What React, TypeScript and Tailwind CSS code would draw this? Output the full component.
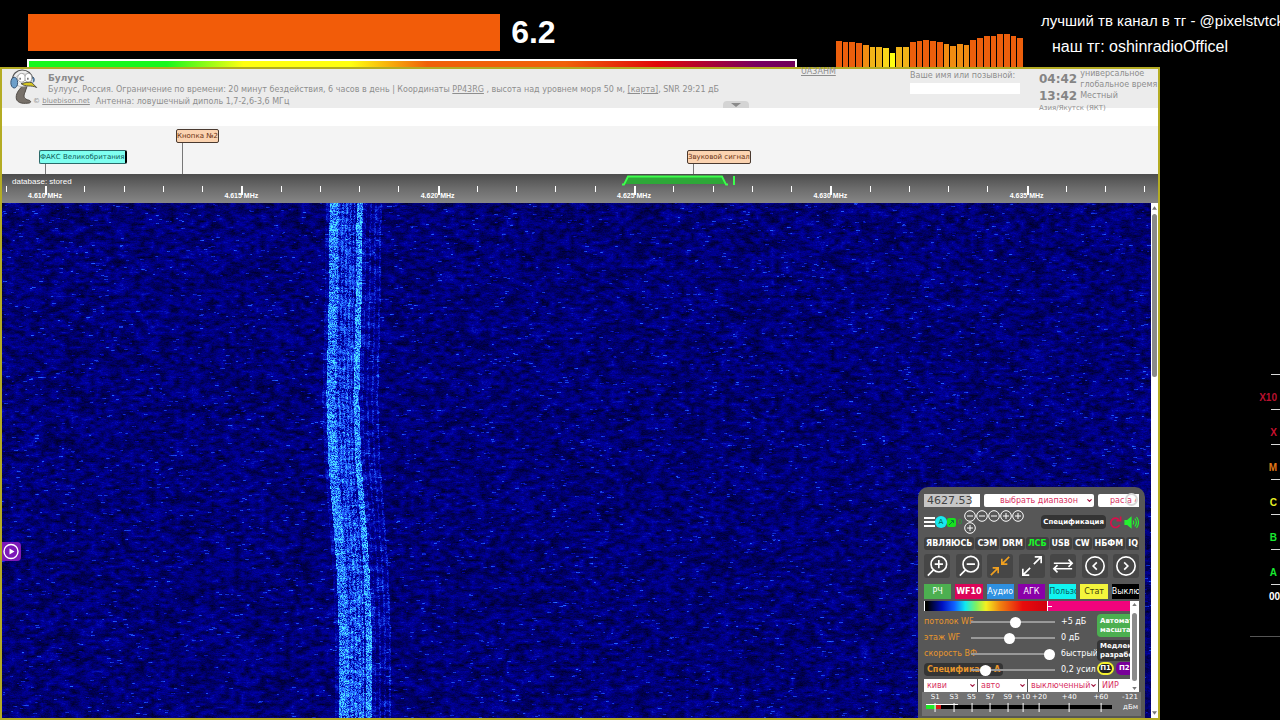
import { useEffect, useRef, type ReactNode } from "react";
import { ChevronDown } from "lucide-react";

const START_KHZ = 4608.905;
const SPAN_KHZ = 29.44;
const pos = (khz: number) => `${((khz - START_KHZ) / SPAN_KHZ) * 100}%`;

const TICKS = Array.from({ length: 30 }, (_, i) => 4609 + i);
const MHZ_LABELS = [4610, 4615, 4620, 4625, 4630, 4635];

const SPECTRUM = [26, 25, 25, 24, 22, 20, 20, 19, 14, 20, 20, 25, 26, 27, 26, 25, 23, 21, 23, 22, 27, 29, 31, 31, 33, 33, 31, 29];

const barColor = (v: number) => {
  if (v < 16) return "#ffff10";
  if (v < 20) return "#fbd81a";
  if (v < 21) return "#f2b418";
  if (v < 24) return "#f08c12";
  return "#ec5f0c";
};

const FLARE_CLASSES = [
  { name: "X10", color: "text-[#b8102e]" },
  { name: "X", color: "text-[#c8102e]" },
  { name: "M", color: "text-[#e07818]" },
  { name: "C", color: "text-[#e6f024]" },
  { name: "B", color: "text-[#18e830]" },
  { name: "A", color: "text-[#18e830]" },
];

// left edge of the carrier, sampled down the waterfall
const DRIFT: [number, number][] = [
  [0, 0.2848], [0.2, 0.2837], [0.38, 0.2818], [0.5, 0.2835],
  [0.62, 0.2878], [0.72, 0.291], [0.85, 0.2929], [1, 0.2933],
];

function driftAt(t: number) {
  for (let i = 1; i < DRIFT.length; i++) {
    const [t0, v0] = DRIFT[i - 1];
    const [t1, v1] = DRIFT[i];
    if (t <= t1) return v0 + ((t - t0) / (t1 - t0)) * (v1 - v0);
  }
  return DRIFT[DRIFT.length - 1][1];
}

// signal strength by distance from the left edge
function signalAt(d: number, t: number) {
  if (d < -4 || d > 52) return 0;
  if (d < 0) return 0.12;
  if (d < 9) return 0.5;
  if (d < 25) return (Math.floor(d) % 4 < 2 ? 0.38 : 0.24) + (t - 0.3) * 0.14;
  if (d < 27) return 0.2;
  if (d < 33) return 0.54;
  if (d < 36) return 0.14;
  return Math.floor(d) % 5 < 2 ? 0.18 : 0.07;
}

function Waterfall() {
  const ref = useRef<HTMLCanvasElement>(null);

  useEffect(() => {
    const canvas = ref.current;
    if (!canvas) return;
    const w = canvas.clientWidth;
    const h = canvas.clientHeight;
    canvas.width = w;
    canvas.height = h;
    const ctx = canvas.getContext("2d");
    if (!ctx) return;
    const img = ctx.createImageData(w, h);

    let seed = 4627;
    const rnd = () => {
      seed = (seed * 1664525 + 1013904223) >>> 0;
      return seed / 4294967296;
    };

    // coarse cells give the soft clumps under the fine grain
    const cw = Math.ceil(w / 5) + 2;
    const ch = Math.ceil(h / 3) + 2;
    const cells = Array.from({ length: cw * ch }, rnd);

    for (let y = 0; y < h; y++) {
      const left = driftAt(y / h) * w;
      let grain = rnd();
      let streak = 0;
      for (let x = 0; x < w; x++) {
        grain = grain * 0.45 + rnd() * 0.55;
        const fx = x / 5;
        const fy = y / 3;
        const ix = Math.floor(fx);
        const iy = Math.floor(fy);
        const ax = fx - ix;
        const ay = fy - iy;
        const c = iy * cw + ix;
        const soft =
          (cells[c] * (1 - ax) + cells[c + 1] * ax) * (1 - ay) +
          (cells[c + cw] * (1 - ax) + cells[c + cw + 1] * ax) * ay;
        let v = soft * 0.3 + grain * 0.2;
        if (rnd() > 0.994) streak = 2 + Math.floor(rnd() * 3);
        if (streak > 0) {
          v += 0.24;
          streak--;
        }
        v += signalAt(x - left, y / h) * (0.35 + rnd() * 1.1);

        v = Math.min(1, v);
        const i = (y * w + x) * 4;
        const hot = Math.max(0, v - 0.38) / 0.62;
        img.data[i] = hot * 80;
        img.data[i + 1] = hot * 235;
        img.data[i + 2] = Math.min(255, 24 + v * 370);
        img.data[i + 3] = 255;
      }
    }
    ctx.putImageData(img, 0, 0);
  }, []);

  return (
    <div className="relative min-w-0 flex-1">
      <canvas ref={ref} className="absolute inset-0 h-full w-full" />
    </div>
  );
}

function Pelican() {
  return (
    <svg viewBox="0 0 30 40" className="h-[39px] w-[30px] shrink-0" aria-hidden="true">
      <path d="M14 17C11 20 7 24 7 29c0 5 5 7 12 6 3 0 4-2 1-3-5-1-6-4-4-8l2-6z" fill="#777069" stroke="#4d4843" strokeWidth="1" />
      <path d="M3 12C3 5 8 1 13 1c6 0 10 4 11 9" fill="none" stroke="#555" strokeWidth="1.2" />
      <path d="M6 10c2-6 14-7 17 0l-1 6c-5 3-11 3-15 0z" fill="#f4f4f4" stroke="#999" strokeWidth="0.600" />
      <ellipse cx="12.500" cy="9" rx="4" ry="4.500" fill="#fff" stroke="#888" strokeWidth="0.700" />
      <ellipse cx="19.500" cy="9" rx="3.500" ry="4.500" fill="#fff" stroke="#888" strokeWidth="0.700" />
      <path d="M11 9v2M19 9v2" stroke="#222" strokeWidth="1" />
      <path d="M12 15c4-1 8-2 11-1l5 5c-6-3-11 0-16-4z" fill="#d8c820" stroke="#444" strokeWidth="0.900" />
      <ellipse cx="5" cy="14" rx="3.500" ry="5.500" fill="#6d9fca" stroke="#35506e" strokeWidth="1" />
      <path d="M24 8c2 1 2 5 0 6" fill="#5b8fc0" stroke="#35506e" strokeWidth="0.900" />
    </svg>
  );
}

function StreamHeader() {
  const level = 61.4;
  return (
    <header className="flex h-[67px] shrink-0">
      <div className="flex min-w-0 flex-1 flex-col justify-between pl-[27px] pt-[14px]">
        <div className="flex h-[37px] items-center gap-[11px] pl-px">
          <div className="h-full bg-[#f25c09]" style={{ width: `${level}%` }} />
          <span className="text-[32px] leading-[37px] font-bold text-white">6.2</span>
        </div>
        <div className="h-[8px] border-x-2 border-t-2 border-white bg-[linear-gradient(90deg,#18f81c_0%,#18f81c_18%,#ffff10_28%,#ffff10_42%,#f06008_52%,#f06008_70%,#e00808_82%,#780060_95%,#700058_100%)]" />
      </div>
      <div className="ml-[39px] flex w-[187px] shrink-0 items-end gap-px">
        {SPECTRUM.map((v, i) => (
          <div key={i} className="min-w-0 flex-1" style={{ height: v, background: barColor(v) }} />
        ))}
      </div>
      <div className="ml-[18px] w-[239px] shrink-0 pt-[10px] whitespace-nowrap text-white">
        <p className="text-[15px] leading-[22px]">лучший тв канал в тг - @pixelstvtck</p>
        <p className="pt-[4px] pl-[11px] text-[16px] leading-[22px]">наш тг: oshinradioOfficel</p>
      </div>
    </header>
  );
}

function StationBar() {
  return (
    <div className="relative flex h-[39px] shrink-0 bg-[#ececec] pl-[7px] font-['DejaVu_Sans',sans-serif] text-[8px] leading-[12px] text-[#8e8e8e]">
      <Pelican />
      <div className="min-w-0 flex-1 pt-[3px] pl-[9px] whitespace-nowrap">
        <h1 className="text-[9px] leading-[12px] font-bold text-[#8a8a8a]">Булуус</h1>
        <p>
          Булуус, Россия. Ограничение по времени: 20 минут бездействия, 6 часов в день | Координаты{" "}
          <a href="#grid" className="underline">PP43RG</a> , высота над уровнем моря 50 м,{" "}
          <a href="#map" className="underline">[карта]</a>, SNR 29:21 дБ
        </p>
        <p className="-ml-[15px] flex gap-[6px] leading-[11px]">
          <a href="#logo" className="text-[7px]">© <span className="underline">bluebison.net</span></a>
          <span>Антенна: ловушечный диполь 1,7-2,6-3,6 МГц</span>
        </p>
      </div>
      <a href="#operator" className="absolute top-[-3px] left-[799px] underline">UA3AHM</a>
      <button aria-label="Свернуть" className="absolute bottom-0 left-[721px] flex h-[7px] w-[26px] items-center justify-center rounded-t bg-[#d4d4d4]">
        <svg viewBox="0 0 10 4" className="h-[4px] w-[10px]"><path d="M0 0h10L5 4z" fill="#8a8a8a" /></svg>
      </button>
      <label className="w-[129px] shrink-0 pt-[1px]">
        Ваше имя или позывной:
        <input className="mt-px block h-[11px] w-[110px] bg-white" />
      </label>
      <div className="w-[119px] shrink-0 whitespace-nowrap">
        <div className="flex h-[20px] items-center gap-[3px]">
          <b className="text-[12px] text-[#858585]">04:42</b>
          <span className="leading-[11px]">универсальное<br />глобальное время</span>
        </div>
        <div className="flex h-[14px] items-center gap-[3px]">
          <b className="text-[12px] text-[#858585]">13:42</b>
          <span>Местный</span>
        </div>
        <p className="text-[7px] leading-[10px]">Азия/Якутск (ЯКТ)</p>
      </div>
    </div>
  );
}

function Bookmark({ khz, className, stem, children }: { khz: number; className: string; stem: string; children: ReactNode }) {
  return (
    <div className="absolute bottom-0" style={{ left: pos(khz) }}>
      <button className={`-ml-[6px] block h-[14px] rounded-[2px] border text-[7px] leading-[12px] whitespace-nowrap ${className}`}>
        {children}
      </button>
      <div className={`w-px bg-[#777] ${stem}`} />
    </div>
  );
}

function Scale() {
  return (
    <>
      <div className="relative h-[48px] shrink-0 bg-[#f4f4f4] font-['DejaVu_Sans',sans-serif]">
        <Bookmark khz={4610} stem="h-[10px]" className="border-[#2b6a6a] border-r-2 border-r-black bg-[#7ffff0] text-[#0e5a58]">
          ФАКС Великобритания
        </Bookmark>
        <Bookmark khz={4613.49} stem="h-[31px]" className="border-[#4a3a30] bg-[#fbd3b0] text-[#6a3010]">
          Кнопка №2
        </Bookmark>
        <Bookmark khz={4626.5} stem="h-[10px]" className="border-[#4a3a30] bg-[#fbd3b0] text-[#6a3010]">
          Звуковой сигнал
        </Bookmark>
      </div>
      <div className="relative h-[29px] shrink-0 overflow-hidden bg-[linear-gradient(#4c4c4c,#6c6c6c_50%,#868686)] text-[7px] font-bold text-white">
        <span className="block pt-[3px] pl-[10px] text-[8px] leading-[10px] font-normal">database: stored</span>
        {TICKS.map((k) => (
          <i
            key={k}
            className={k % 5 === 0 ? "absolute top-[12px] h-[9px] w-[2px] bg-white" : "absolute top-[12px] h-[6px] w-px bg-white"}
            style={{ left: pos(k) }}
          />
        ))}
        {MHZ_LABELS.map((k) => (
          <span key={k} className="absolute top-[17px] -translate-x-1/2 leading-[10px] whitespace-nowrap" style={{ left: pos(k) }}>
            {(k / 1000).toFixed(3)} MHz
          </span>
        ))}
        <svg viewBox="0 0 114 11" className="absolute top-[1px] h-[11px] w-[114px]" style={{ left: pos(4624.7) }} aria-hidden="true">
          <path d="M2 9L6 1.500H100L104 9" fill="#2ea838" />
          <path d="M0 9.500H2L6 1.500H100L104 9.500H106" fill="none" stroke="#3cff4c" strokeWidth="1.800" />
          <path d="M112 1v9" stroke="#3cff4c" strokeWidth="2" />
        </svg>
      </div>
    </>
  );
}

function Select({ label, value, className, arrow = true }: { label: string; value: string; className: string; arrow?: boolean }) {
  return (
    <span className={`relative block h-[13px] min-w-0 bg-white text-[#d8315f] ${className}`}>
      <select aria-label={label} className="block h-full w-full appearance-none overflow-hidden px-[3px] text-[8px] leading-[13px] outline-none [text-align-last:inherit]">
        <option>{value}</option>
      </select>
      {arrow && <ChevronDown className="pointer-events-none absolute top-[3px] right-[1px] size-[7px] text-[#a01840]" strokeWidth={4} />}
    </span>
  );
}

function ZoomDot({ plus }: { plus?: boolean }) {
  return (
    <button aria-label={plus ? "Больше" : "Меньше"} className="size-[12px]">
      <svg viewBox="0 0 12 12" className="size-[12px]" fill="none" stroke="#fff" strokeWidth="1">
        <circle cx="6" cy="6" r="5.300" />
        <path d={plus ? "M3 6h6M6 3v6" : "M3 6h6"} />
      </svg>
    </button>
  );
}

const MODES = ["ЯВЛЯЮСЬ", "СЭМ", "DRM", "ЛСБ", "USB", "CW", "НБФМ", "IQ"];

const TOOLS = [
  { name: "Приблизить", d: "M8.500 16L2 22.500M9.500 10h9M14 5.500v9M22.500 10a8.500 8.500 0 1 1-17 0a8.500 8.500 0 1 1 17 0" },
  { name: "Отдалить", d: "M8.500 16L2 22.500M9.500 10h9M22.500 10a8.500 8.500 0 1 1-17 0a8.500 8.500 0 1 1 17 0" },
  { name: "Сжать", d: "M22 2l-8 8M14 4v6h6M2 22l8-8M4 14h6v6", color: "text-[#f0a020]" },
  { name: "Развернуть", d: "M14 10l8-8M15 2h7v7M10 14l-8 8M2 15v7h7" },
  { name: "Поменять", d: "M2 9h20M18 5l4 4-4 4M22 15H2M6 11l-4 4 4 4" },
  { name: "Назад", d: "M14 8l-4 4 4 4M22 12a10 10 0 1 1-20 0a10 10 0 1 1 20 0" },
  { name: "Вперед", d: "M10 8l4 4-4 4M22 12a10 10 0 1 1-20 0a10 10 0 1 1 20 0" },
];

const TABS = [
  { name: "РЧ", cls: "bg-[#4caf50] text-white" },
  { name: "WF10", cls: "bg-[#dc0458] text-white font-bold" },
  { name: "Аудио", cls: "bg-[#2e90e0] text-white" },
  { name: "АГК", cls: "bg-[#8a00a8] text-white" },
  { name: "Пользо", cls: "bg-[#10f4f0] text-[#0a5c60]" },
  { name: "Стат", cls: "bg-[#f4f43c] text-[#404010]" },
  { name: "Выклю", cls: "bg-black text-white" },
];

const SLIDERS = [
  { label: "потолок WF", value: "+5 дБ", at: 54 },
  { label: "этаж WF", value: "0 дБ", at: 45 },
  { label: "скорость ВФ", value: "быстрый", at: 100 },
  { label: "Спецификаци А", value: "0,2 усил", at: 12, boxed: true },
];

const S_UNITS = [
  ["S1", 5], ["S3", 15], ["S5", 24.5], ["S7", 34.5], ["S9", 44], ["+10", 52], ["+20", 61], ["+40", 77], ["+60", 94],
] as const;

function ControlPanel() {
  return (
    <section className="absolute right-[13px] bottom-0 w-[227px] overflow-hidden rounded-t-[10px] bg-[#575757] font-['DejaVu_Sans',sans-serif] text-[8px] text-white">
      <div className="px-[6px] pt-[7px]">
        <div className="flex h-[13px] gap-[4px]">
          <input aria-label="Частота" defaultValue="4627.53" className="w-[56px] bg-[linear-gradient(90deg,#c6c6c6_46px,#fff_46px)] px-[3px] text-[11px] leading-[13px] text-[#444]" />
          <Select label="Диапазон" value="выбрать диапазон" className="w-[110px] rounded-[2px] [text-align-last:center]" />
          <span className="relative min-w-0 flex-1">
            <Select label="Расширение" value="рас:а 4" className="rounded-l-[2px] pl-[9px]" arrow={false} />
            <i className="absolute -top-[1px] right-[1px] size-[13px] rounded-full border-2 border-[#d8d8d8]" />
          </span>
        </div>

        <div className="mt-[2px] flex h-[26px] items-center">
          <button aria-label="Меню" className="flex w-[11px] flex-col gap-[2px]">
            <i className="h-[2px] bg-white" /><i className="h-[2px] bg-white" /><i className="h-[2px] bg-white" />
          </button>
          <button className="size-[12px] rounded-full bg-[#18e8f0] text-[7px] leading-[12px] text-[#064]">A</button>
          <button aria-label="Связь" className="size-[9px] rounded-[2px] bg-[#18e020]">
            <svg viewBox="0 0 9 9" className="size-[9px]"><path d="M2 7l4-4M4 2.500h2.500V5" stroke="#083" fill="none" /></svg>
          </button>
          <span className="w-[8px] text-center text-[7px] text-[#2aa030]">0</span>
          <span className="flex w-[64px] flex-wrap content-center">
            <ZoomDot /><ZoomDot /><ZoomDot /><ZoomDot plus /><ZoomDot plus /><ZoomDot plus />
          </span>
          <button className="ml-auto h-[14px] rounded-[4px] bg-[#343434] px-[2px] text-[7px] leading-[14px] font-bold">Спецификация</button>
          <button aria-label="Обновить" className="ml-[3px]">
            <svg viewBox="0 0 14 14" className="size-[13px]" fill="none" stroke="#d8104c" strokeWidth="1.800">
              <path d="M11.500 9.500A5 5 0 1 1 10.500 3.800M12.500 0.500v4.500h-4.500" />
            </svg>
          </button>
          <button aria-label="Звук" className="ml-[2px]">
            <svg viewBox="0 0 15 13" className="h-[13px] w-[15px]" fill="none" stroke="#24f030" strokeWidth="1.200">
              <path d="M1 4.500h2.500l3.500-3v10L3.500 8.500H1z" fill="#24f030" />
              <path d="M9 4.500q1.500 2 0 4M10.800 2.500q3.200 4 0 8M12.500 1q4 5.500 0 11" />
            </svg>
          </button>
        </div>

        <div className="mt-[2px] flex h-[13px] gap-[1px] overflow-hidden">
          {MODES.map((m) => (
            <button key={m} className={`shrink-0 rounded-[3px] bg-[#404040] px-[2px] text-[8px] leading-[13px] font-bold ${m === "ЛСБ" ? "text-[#18f828]" : ""}`}>
              {m}
            </button>
          ))}
        </div>

        <div className="mt-[4px] flex h-[24px] justify-between">
          {TOOLS.map((t) => (
            <button key={t.name} aria-label={t.name} className={`flex w-[26px] items-center justify-center rounded-[3px] bg-[#464646] ${t.color ?? ""}`}>
              <svg viewBox="0 0 24 24" className="size-[22px]" fill="none" stroke="currentColor" strokeWidth="1.800"><path d={t.d} /></svg>
            </button>
          ))}
        </div>

        <div className="mt-[6px] flex h-[15px] gap-[4px] overflow-hidden">
          {TABS.map((t) => (
            <button key={t.name} className={`min-w-0 flex-1 overflow-hidden text-[8px] leading-[15px] whitespace-nowrap ${t.cls}`}>{t.name}</button>
          ))}
        </div>

        <div className="mt-[2px] flex h-[91px]">
          <div className="flex min-w-0 flex-1 flex-col">
            <div className="flex h-[10px] border-l border-white">
              <div className="w-[60%] border-r border-white bg-[linear-gradient(90deg,#000_2%,#0010c0_14%,#1060ff_24%,#10e8f0_33%,#80f060_42%,#f4f020_50%,#f08010_62%,#e80c0c_80%,#d00010_100%)]" />
              <div className="flex flex-1 items-center bg-[#f0047c]"><i className="h-px w-[4px] bg-white" /></div>
            </div>
            <div className="flex min-h-0 flex-1">
              <div className="w-[173px] shrink-0 pt-[3px]">
                {SLIDERS.map((s) => (
                  <label key={s.label} className="flex h-[16px] items-center whitespace-nowrap">
                    <span className="w-[47px] shrink-0 text-[#e8962c]">
                      <span className={s.boxed ? "rounded-[4px] bg-[#343434] px-[3px] py-[2px] font-bold" : ""}>{s.label}</span>
                    </span>
                    <input
                      type="range"
                      defaultValue={s.at}
                      className="relative h-[11px] w-[84px] shrink-0 appearance-none bg-[linear-gradient(#999,#999)] bg-[length:100%_2px] bg-center bg-no-repeat [&::-webkit-slider-thumb]:size-[11px] [&::-webkit-slider-thumb]:appearance-none [&::-webkit-slider-thumb]:rounded-full [&::-webkit-slider-thumb]:bg-white"
                    />
                    <span className="pl-[6px]">{s.value}</span>
                  </label>
                ))}
              </div>
              <div className="min-w-0 flex-1 overflow-hidden pt-[3px] font-bold">
                <button className="block h-[23px] w-full overflow-hidden rounded-l-[4px] bg-[#4caf50] pl-[3px] text-left text-[7px] leading-[9px]">Автомат<br />масштаб</button>
                <button className="mt-[3px] block h-[21px] w-full overflow-hidden rounded-l-[4px] bg-[#343434] pl-[3px] text-left text-[7px] leading-[9px]">Медлен<br />разрабо</button>
                <div className="mt-[1px] flex gap-[2px]">
                  <button className="h-[13px] w-[17px] shrink-0 rounded-full border-2 border-[#f4f030] bg-[#222] text-[7px] leading-[9px]">П1</button>
                  <button className="h-[13px] w-[20px] shrink-0 rounded-l-[5px] bg-[#780098] pl-[3px] text-left text-[7px] leading-[13px]">П2</button>
                </div>
              </div>
            </div>
            <div className="flex shrink-0 gap-px">
              <Select label="Палитра" value="киви" className="w-[53px]" />
              <Select label="Апертура" value="авто" className="w-[49px]" />
              <Select label="Режим" value="выключенный" className="w-[70px]" />
              <Select label="Фильтр" value="ИИР" className="flex-1" arrow={false} />
            </div>
          </div>
          <div className="flex w-[9px] flex-col items-center justify-between bg-white py-[2px]">
            <svg viewBox="0 0 6 4" className="h-[3px] w-[5px]"><path d="M0 4h6L3 0z" fill="#777" /></svg>
            <i className="h-[68px] w-[5px] rounded-full bg-[#8a8a8a]" />
            <svg viewBox="0 0 6 4" className="h-[3px] w-[5px]"><path d="M0 0h6L3 4z" fill="#777" /></svg>
          </div>
        </div>
      </div>

      <div className="mx-[4px] mb-[2px] flex h-[24px] bg-[#727272] pl-[4px] text-[7px]">
        <div className="relative w-[186px]">
          <div className="absolute inset-x-0 top-[13px] flex h-[4px] bg-black">
            <i className="w-[10px] bg-[#20e828]" />
            <i className="w-[5px] bg-[#d81818]" />
          </div>
          <i className="absolute top-[12px] left-0 h-px w-[32px] bg-white" />
          {S_UNITS.map(([name, left]) => (
            <span key={name} className="absolute top-0 flex -translate-x-1/2 flex-col items-center leading-[10px]" style={{ left: `${left}%` }}>
              {name}
              <i className="mt-[1px] h-[9px] w-px bg-white" />
            </span>
          ))}
        </div>
        <div className="flex-1 pr-[3px] text-right leading-[10px]">-121<br />дБм</div>
      </div>
    </section>
  );
}

function FlareRail() {
  return (
    <aside className="flex w-[120px] shrink-0 flex-col items-end overflow-hidden pt-[307px] text-[10px] font-bold">
      {FLARE_CLASSES.map((f) => (
        <div key={f.name} className="flex h-[35px] flex-col items-end">
          <i className="h-px w-[9px] bg-[#d8d8d8]" />
          <span className={`pt-[17px] pr-[3px] leading-[12px] ${f.color}`}>{f.name}</span>
        </div>
      ))}
      <i className="h-px w-[9px] bg-[#d8d8d8]" />
      <span className="pt-[6px] leading-[12px] text-white">00</span>
      <i className="mt-[33px] h-px w-[30px] bg-[#555]" />
    </aside>
  );
}

export default function App() {
  return (
    <div className="flex h-screen flex-col overflow-hidden bg-black font-['Liberation_Sans',Arial,sans-serif]">
      <StreamHeader />
      <div className="flex min-h-0 flex-1">
        <main className="relative flex min-w-0 flex-1 flex-col border-2 border-[#b4ac24] bg-white">
          <StationBar />
          <div className="h-[18px] shrink-0" />
          <Scale />
          <div className="flex min-h-0 flex-1">
            <Waterfall />
            <div className="flex w-[7px] flex-col items-center justify-between bg-white py-[3px]">
              <svg viewBox="0 0 6 4" className="h-[4px] w-[5px]"><path d="M0 4h6L3 0z" fill="#777" /></svg>
              <i className="mt-[4px] mb-auto h-[32%] w-[5px] rounded-full bg-[#8a8a8a]" />
              <svg viewBox="0 0 6 4" className="h-[4px] w-[5px]"><path d="M0 0h6L3 4z" fill="#777" /></svg>
            </div>
          </div>
          <button aria-label="Воспроизвести" className="absolute top-[473px] left-0 flex size-[19px] items-center justify-center rounded-r-[4px] bg-[#7c18b8]">
            <svg viewBox="0 0 17 17" className="size-[17px]" fill="none" stroke="#fff" strokeWidth="1.400">
              <circle cx="8" cy="8.500" r="7" />
              <path d="M6.500 5.500v6l5-3z" fill="#fff" stroke="none" />
            </svg>
          </button>
          <ControlPanel />
        </main>
        <FlareRail />
      </div>
    </div>
  );
}
